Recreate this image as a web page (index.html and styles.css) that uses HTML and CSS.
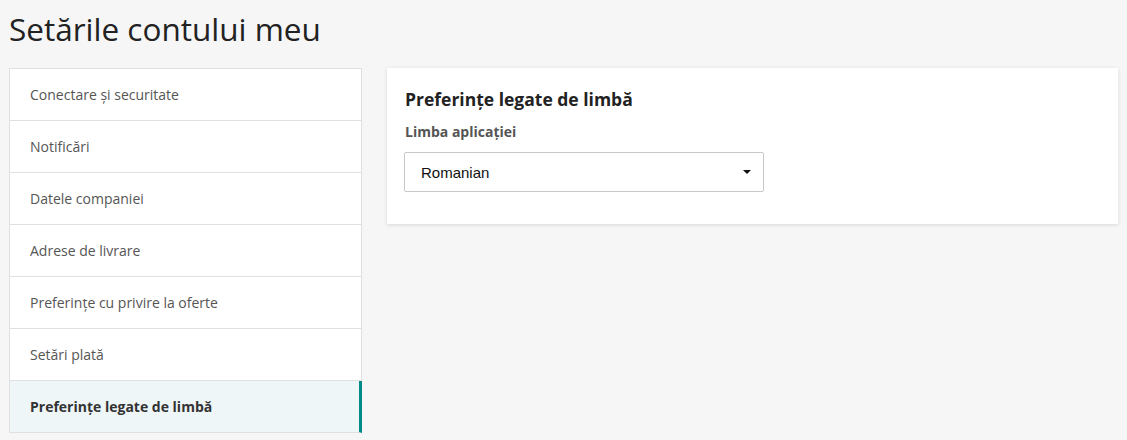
FILE: index.html
```html
<!DOCTYPE html>
<html lang="ro">
<head>
<meta charset="utf-8">
<title>Setările contului meu</title>
<link rel="stylesheet" href="styles.css">
</head>
<body>
<div class="page">
  <h1 class="page-title">Setările contului meu</h1>
  <div class="layout">
    <nav class="side-nav">
      <a class="nav-item">Conectare și securitate</a>
      <a class="nav-item">Notificări</a>
      <a class="nav-item">Datele companiei</a>
      <a class="nav-item">Adrese de livrare</a>
      <a class="nav-item">Preferințe cu privire la oferte</a>
      <a class="nav-item">Setări plată</a>
      <a class="nav-item active">Preferințe legate de limbă</a>
    </nav>
    <section class="card">
      <h2 class="card-title">Preferințe legate de limbă</h2>
      <div class="field-label">Limba aplicației</div>
      <div class="select">
        <span class="select-value">Romanian</span>
        <span class="caret"></span>
      </div>
    </section>
  </div>
</div>
</body>
</html>
```
FILE: styles.css
```css
html, body {
  margin: 0;
  padding: 0;
  background: #f6f6f6;
  font-family: "Open Sans", "Liberation Sans", sans-serif;
}

.page {
  padding: 0 9px;
}

.page-title {
  margin: 0;
  padding-top: 9px;
  height: 68px;
  box-sizing: border-box;
  font-size: 31.5px;
  font-weight: 400;
  color: #222;
  line-height: 40px;
}

.layout {
  display: flex;
  align-items: flex-start;
  gap: 25px;
}

.side-nav {
  width: 353px;
  flex: none;
  display: flex;
  flex-direction: column;
  border: 1px solid #e0e0e0;
  border-bottom: none;
  background: #fff;
  box-sizing: border-box;
}

.nav-item {
  display: flex;
  align-items: center;
  height: 52px;
  box-sizing: border-box;
  padding-left: 20px;
  border-bottom: 1px solid #e0e0e0;
  font-size: 14px;
  color: #555;
}

.nav-item.active {
  background: #eff6f8;
  font-weight: 700;
  color: #333;
  border-right: 3px solid #008b8b;
  margin-right: -1px;
}

.card {
  flex: 1;
  background: #fff;
  box-shadow: 0 1px 4px rgba(0, 0, 0, 0.12);
  padding: 18px 18px 31px 18px;
  height: 156px;
  box-sizing: border-box;
}

.card-title {
  margin: 0;
  font-size: 17.5px;
  font-weight: 700;
  color: #222;
  line-height: 26px;
}

.field-label {
  margin-top: 10px;
  font-size: 14px;
  font-weight: 700;
  color: #555;
  line-height: 20px;
}

.select {
  margin-top: 10px;
  width: 360px;
  height: 40px;
  box-sizing: border-box;
  border: 1px solid #c8c8c8;
  border-radius: 2px;
  display: flex;
  align-items: center;
  justify-content: space-between;
  padding: 0 12px 0 16px;
  margin-left: -1px;
}

.select-value {
  font-family: "Liberation Sans", Arial, sans-serif;
  font-size: 15px;
  color: #111;
}

.caret {
  width: 0;
  height: 0;
  border-left: 4px solid transparent;
  border-right: 4px solid transparent;
  border-top: 4px solid #111;
}
```
